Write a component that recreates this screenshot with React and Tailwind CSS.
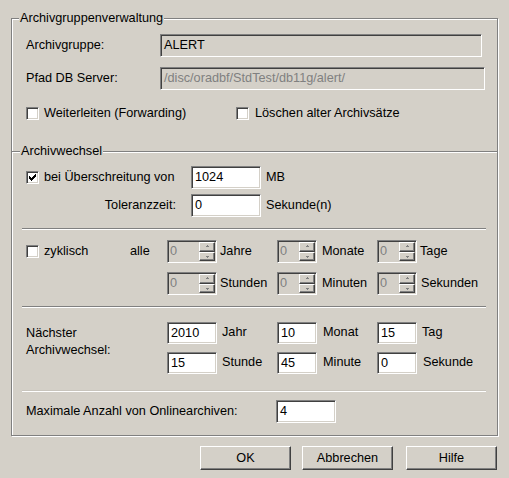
import React from "react";

const CHECK = ["......x", ".....xx", "x...xxx", "xx.xxx.", "xxxxx..", ".xxx...", "..x...."];

function Check({ checked }) {
  return (
    <div className="w-[13px] h-[13px] shrink-0 bg-white border border-t-[#808080] border-l-[#808080] border-r-white border-b-white shadow-[inset_1px_1px_0_#404040,inset_-1px_-1px_0_#d4d0c8] flex items-center justify-center">
      {checked && (
        <svg width="7" height="7" viewBox="0 0 7 7" shapeRendering="crispEdges">
          {CHECK.flatMap((row, y) =>
            row.split("").map((c, x) =>
              c === "x" ? <rect key={`${x}-${y}`} x={x} y={y} width="1" height="1" fill="#000" /> : null
            )
          )}
        </svg>
      )}
    </div>
  );
}

function Arrow({ up }) {
  return (
    <svg width="5" height="3" viewBox="0 0 5 3" shapeRendering="crispEdges">
      {up ? (
        <>
          <rect x="2" y="0" width="1" height="1" fill="#808080" />
          <rect x="1" y="1" width="3" height="1" fill="#808080" />
        </>
      ) : (
        <>
          <rect x="1" y="1" width="3" height="1" fill="#808080" />
          <rect x="2" y="2" width="1" height="1" fill="#808080" />
        </>
      )}
    </svg>
  );
}

function SpinBtn({ up }) {
  return (
    <div className="flex-1 flex items-center justify-center bg-[#d4d0c8] border border-t-white border-l-white border-r-[#404040] border-b-[#404040] shadow-[inset_-1px_-1px_0_#808080]">
      <Arrow up={up} />
    </div>
  );
}

function Spin({ wide }) {
  return (
    <div
      className={
        wide
          ? "w-[50px] h-[23px] shrink-0 flex p-[1px] bg-[#d4d0c8] border border-t-[#808080] border-l-[#808080] border-r-white border-b-white shadow-[inset_1px_1px_0_#404040,inset_-1px_-1px_0_#d4d0c8]"
          : "w-[40px] h-[23px] shrink-0 flex p-[1px] bg-[#d4d0c8] border border-t-[#808080] border-l-[#808080] border-r-white border-b-white shadow-[inset_1px_1px_0_#404040,inset_-1px_-1px_0_#d4d0c8]"
      }
    >
      <div className="flex-1 pl-[1px] flex items-center text-[#808080]">0</div>
      <div className="w-[16px] flex flex-col">
        <SpinBtn up />
        <SpinBtn />
      </div>
    </div>
  );
}

function Field({ cls, value }) {
  return (
    <div
      className={
        "shrink-0 flex items-center pl-[3px] border border-t-[#808080] border-l-[#808080] border-r-white border-b-white shadow-[inset_1px_1px_0_#404040,inset_-1px_-1px_0_#d4d0c8] " +
        cls
      }
    >
      {value}
    </div>
  );
}

function Sep() {
  return <div className="h-[2px] ml-[10px] mr-[11px] border-t border-b border-t-[#808080] border-b-white" />;
}

function Button({ children, cls }) {
  return (
    <div
      className={
        "w-[91px] h-[24px] flex items-center justify-center bg-[#d4d0c8] border border-t-white border-l-white border-r-[#404040] border-b-[#404040] shadow-[inset_-1px_-1px_0_#808080] " +
        cls
      }
    >
      {children}
    </div>
  );
}

export default function App() {
  return (
    <div className="w-[509px] h-[478px] overflow-hidden bg-[#d4d0c8] pl-[11px] pt-[11px] text-[12.7px] leading-[15px] text-black font-['Liberation_Sans',Arial,sans-serif]">
      <fieldset className="w-[487px] m-0 p-0 pb-[12px] border border-[#808080] shadow-[inset_1px_1px_0_#fff,1px_1px_0_#fff]">
        <legend className="ml-[7px] px-[1px] bg-[#d4d0c8]">Archivgruppenverwaltung</legend>

        <div className="flex items-center mt-[8px] pl-[14px]">
          <div className="w-[134px]">Archivgruppe:</div>
          <Field cls="w-[322px] h-[23px] bg-[#d4d0c8] text-black" value="ALERT" />
        </div>

        <div className="flex items-center mt-[10px] pl-[14px]">
          <div className="w-[134px]">Pfad DB Server:</div>
          <Field cls="w-[325px] h-[23px] bg-[#d4d0c8] text-[#808080]" value="/disc/oradbf/StdTest/db11g/alert/" />
        </div>

        <div className="flex items-center h-[15px] mt-[16px] pl-[14px]">
          <div className="w-[210px] flex items-center">
            <Check />
            <span className="ml-[5px]">Weiterleiten (Forwarding)</span>
          </div>
          <Check />
          <span className="ml-[6px]">Löschen alter Archivsätze</span>
        </div>

        <div className="flex items-center h-[15px] mt-[23px]">
          <div className="w-[8px] h-[2px] border-t border-b border-t-[#808080] border-b-white" />
          <span className="px-[1px]">Archivwechsel</span>
          <div className="flex-1 h-[2px] border-t border-b border-t-[#808080] border-b-white" />
        </div>

        <div className="flex items-center mt-[7px] pl-[14px]">
          <div className="w-[165px] flex items-center">
            <Check checked />
            <span className="ml-[5px]">bei Überschreitung von</span>
          </div>
          <Field cls="w-[70px] h-[23px] bg-white" value="1024" />
          <span className="ml-[5px]">MB</span>
        </div>

        <div className="flex items-center mt-[5px] pl-[14px]">
          <div className="w-[165px] text-right pr-[15px]">Toleranzzeit:</div>
          <Field cls="w-[70px] h-[23px] bg-white" value="0" />
          <span className="ml-[5px]">Sekunde(n)</span>
        </div>

        <div className="mt-[11px]">
          <Sep />
        </div>

        <div className="flex items-center mt-[10px] pl-[14px]">
          <div className="w-[141px] flex items-center">
            <Check />
            <span className="ml-[5px] w-[86px]">zyklisch</span>
            <span>alle</span>
          </div>
          <Spin wide />
          <div className="w-[60px] pl-[3px]">Jahre</div>
          <Spin />
          <div className="w-[60px] pl-[5px]">Monate</div>
          <Spin />
          <div className="pl-[3px]">Tage</div>
        </div>

        <div className="flex items-center mt-[9px] pl-[14px]">
          <div className="w-[141px]" />
          <Spin wide />
          <div className="w-[60px] pl-[3px]">Stunden</div>
          <Spin />
          <div className="w-[60px] pl-[5px]">Minuten</div>
          <Spin />
          <div className="pl-[4px]">Sekunden</div>
        </div>

        <div className="mt-[11px]">
          <Sep />
        </div>

        <div className="flex mt-[14px] pl-[14px]">
          <div className="w-[141px] pt-[3px] leading-[17px]">
            Nächster
            <br />
            Archivwechsel:
          </div>
          <div className="flex flex-col">
            <div className="flex items-center">
              <Field cls="w-[50px] h-[22px] bg-white" value="2010" />
              <div className="w-[60px] pl-[5px] -mt-[2px]">Jahr</div>
              <Field cls="w-[40px] h-[22px] bg-white" value="10" />
              <div className="w-[60px] pl-[6px] -mt-[2px]">Monat</div>
              <Field cls="w-[40px] h-[22px] bg-white" value="15" />
              <div className="pl-[5px] -mt-[2px]">Tag</div>
            </div>
            <div className="flex items-center mt-[8px]">
              <Field cls="w-[50px] h-[22px] bg-white" value="15" />
              <div className="w-[60px] pl-[5px] -mt-[1px]">Stunde</div>
              <Field cls="w-[40px] h-[22px] bg-white" value="45" />
              <div className="w-[60px] pl-[6px] -mt-[1px]">Minute</div>
              <Field cls="w-[40px] h-[22px] bg-white" value="0" />
              <div className="pl-[6px] -mt-[1px]">Sekunde</div>
            </div>
          </div>
        </div>

        <div className="mt-[16px]">
          <div className="h-[2px] ml-[10px] mr-[11px] border-t border-b border-t-[#c8c4bc] border-b-white" />
        </div>

        <div className="flex items-center mt-[8px] pl-[14px]">
          <div className="w-[250px]">Maximale Anzahl von Onlinearchiven:</div>
          <Field cls="w-[60px] h-[23px] bg-white" value="4" />
        </div>
      </fieldset>

      <div className="flex justify-end mt-[10px] pr-[12px]">
        <Button cls="">OK</Button>
        <Button cls="ml-[11px]">Abbrechen</Button>
        <Button cls="ml-[13px]">Hilfe</Button>
      </div>
    </div>
  );
}
